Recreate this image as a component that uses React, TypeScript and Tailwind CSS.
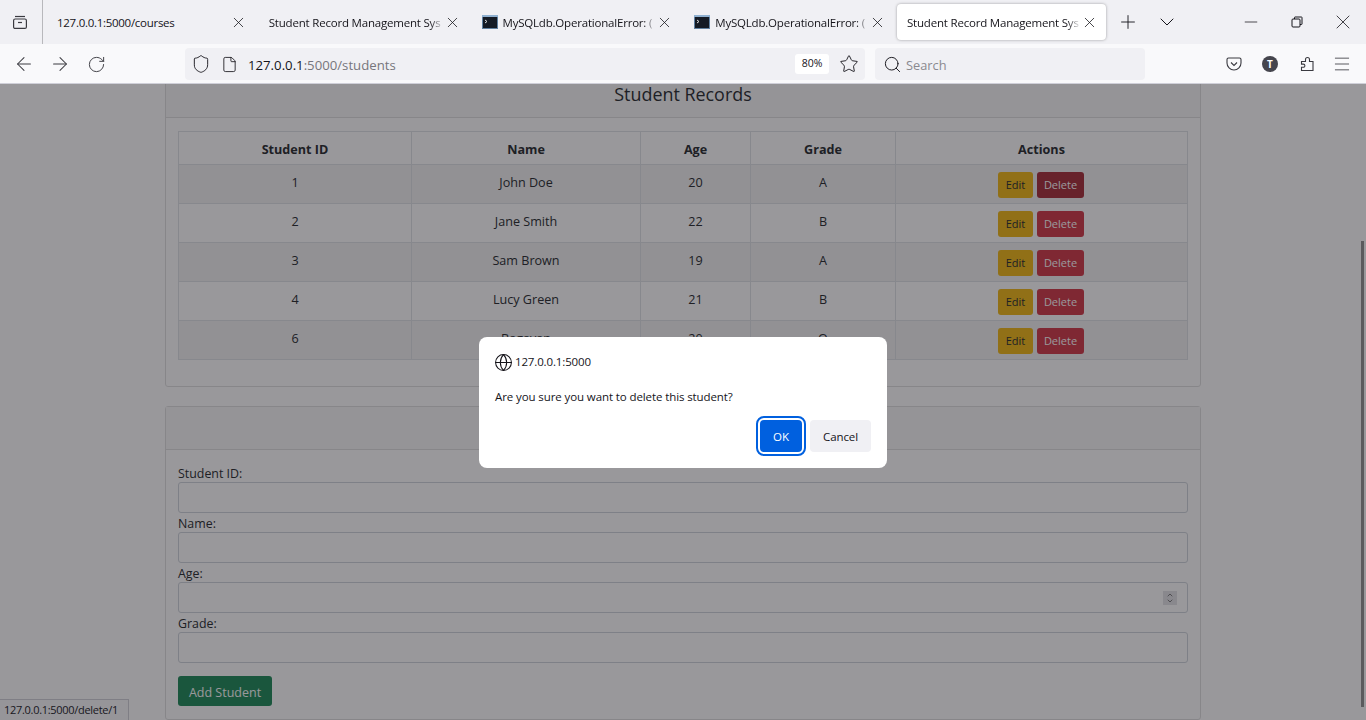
import { ArrowLeft, ArrowRight, Globe, Menu, Minus, Plus, RotateCw, Search, Star, X, ChevronDown, ChevronUp, Shield, File } from 'lucide-react';

const students = [
  { id: 1, name: 'John Doe', age: 20, grade: 'A' },
  { id: 2, name: 'Jane Smith', age: 22, grade: 'B' },
  { id: 3, name: 'Sam Brown', age: 19, grade: 'A' },
  { id: 4, name: 'Lucy Green', age: 21, grade: 'B' },
  { id: 6, name: 'Bagavan', age: 20, grade: 'O' },
];

const fade = 'overflow-hidden whitespace-nowrap [mask-image:linear-gradient(to_right,black_92%,transparent)]';
const tabText = 'pt-[1px] text-[11.5px] tracking-[-0.2px] text-[#15141a]';

function TerminalIcon() {
  return (
    <svg width="16" height="14" viewBox="0 0 16 14" className="shrink-0">
      <rect x="0" y="0" width="16" height="14" fill="#5f7f9f" />
      <rect x="0" y="0" width="16" height="2" fill="#8fb0d0" />
      <rect x="1" y="2" width="14" height="11" fill="#141a24" />
      <path d="M3 5l2 1.5-2 1.5" stroke="#ddd" strokeWidth="1" fill="none" />
    </svg>
  );
}

function Tab({ title, icon }: { title: string; icon?: boolean }) {
  return (
    <div className="flex w-[212.75px] shrink-0 items-center pr-[11px] pl-[10px]">
      {icon && <div className="mr-[5px] flex"><TerminalIcon /></div>}
      <span className={`min-w-0 flex-1 ${tabText} ${fade}`}>{title}</span>
      <X size={17} strokeWidth={1.1} className="shrink-0 text-[#15141a]" />
    </div>
  );
}

function TabBar() {
  return (
    <div className="flex h-[44px] items-center bg-[#f0f0f4]">
      <div className="flex h-full w-[43px] shrink-0 items-center justify-center border-r border-[#b8b8bc] pr-[2px]">
        <svg width="16" height="16" viewBox="0 0 16 16" fill="none" stroke="#3a3a40" strokeWidth="1.2">
          <path d="M3 2.5h10" />
          <rect x="1.6" y="5" width="12.8" height="9.4" rx="1.5" />
          <path d="M6 8.5h4" />
        </svg>
      </div>
      <div className="flex items-center pl-[3px]">
        <div className="flex w-[212.75px] shrink-0 items-center pr-[12px] pl-[11px]">
          <span className="min-w-0 flex-1 whitespace-nowrap pt-[1px] text-[11.5px] tracking-[-0.28px] text-[#15141a]">127.0.0.1:5000/courses</span>
          <X size={17} strokeWidth={1.1} className="shrink-0 text-[#15141a]" />
        </div>
        <Tab title="Student Record Management Sys" />
        <Tab title="MySQLdb.OperationalError: (" icon />
        <Tab title="MySQLdb.OperationalError: (" icon />
        <div className="flex h-[36px] w-[209px] shrink-0 items-center rounded-[4px] bg-white pr-[8px] pl-[10px] shadow-[0_0_3px_rgba(0,0,0,0.35)]">
          <span className={`min-w-0 flex-1 ${tabText} ${fade}`}>Student Record Management Sys</span>
          <X size={17} strokeWidth={1.1} className="shrink-0 text-[#15141a]" />
        </div>
      </div>
      <Plus size={22} strokeWidth={1} className="ml-[11px] shrink-0 text-[#15141a]" />
      <ChevronDown size={24} strokeWidth={1} className="ml-[16px] shrink-0 text-[#15141a]" />
      <div className="ml-auto flex items-center">
        <div className="flex w-[46px] justify-center"><Minus size={20} strokeWidth={0.9} className="text-[#15141a]" /></div>
        <div className="flex w-[46px] justify-center">
          <svg width="12" height="12" viewBox="0 0 12 12" fill="none" stroke="#15141a" strokeWidth="1">
            <rect x="1" y="3" width="8" height="8" rx="1" />
            <path d="M3.5 3V1.5a.5.5 0 0 1 .5-.5h6.5a.5.5 0 0 1 .5.5V8a.5.5 0 0 1-.5.5H9" />
          </svg>
        </div>
        <div className="flex w-[46px] justify-center"><X size={24} strokeWidth={0.8} className="text-[#15141a]" /></div>
      </div>
    </div>
  );
}

function NavBar() {
  return (
    <div className="flex h-[40px] items-center border-b border-[#cfcfd8] bg-[#f9f9fb] pt-[1px] text-[#15141a]">
      <div className="flex w-[185px] shrink-0 items-center pl-[6px] text-[#3a3a40]">
        <div className="flex w-[36px] justify-center"><ArrowLeft size={22} strokeWidth={1.1} /></div>
        <div className="flex w-[36px] justify-center"><ArrowRight size={22} strokeWidth={1.1} /></div>
        <div className="flex w-[36px] justify-center"><RotateCw size={19} strokeWidth={1.2} /></div>
      </div>
      <div className="flex h-[32px] w-[680px] shrink-0 items-center rounded-[4px] bg-[#f0f0f4] pl-[6px]">
        <Shield size={20} strokeWidth={1.1} />
        <File size={17} strokeWidth={1.2} className="ml-[10px]" />
        <span className="ml-[10px] pt-[3px] text-[13.2px] text-[#15141a]">127.0.0.1<span className="text-[#77767c]">:5000/students</span></span>
        <span className="ml-auto flex h-[20px] w-[34px] items-center justify-center rounded-[3px] bg-white text-[10.5px]">80%</span>
        <Star size={20} strokeWidth={1.1} className="mr-[6px] ml-[10px]" />
      </div>
      <div className="ml-[10px] flex h-[32px] w-[270px] shrink-0 items-center rounded-[4px] bg-[#f0f0f4] pl-[8px]">
        <Search size={19} strokeWidth={1.2} />
        <span className="ml-[4px] pt-[3px] text-[12.8px] text-[#8a898f]">Search</span>
      </div>
      <div className="ml-auto flex items-center pr-[14px]">
        <svg width="16" height="16" viewBox="0 0 16 16" fill="none" stroke="#3a3a40" strokeWidth="1.1" className="mr-[20px]">
          <path d="M2.5 2h11A1.5 1.5 0 0 1 15 3.5V7a7 7 0 0 1-14 0V3.5A1.5 1.5 0 0 1 2.5 2z" />
          <path d="M5 6.5l3 3 3-3" />
        </svg>
        <div className="mr-[21px] flex h-[16px] w-[16px] items-center justify-center rounded-full bg-[#45454d] text-[10px] font-bold text-white">T</div>
        <svg width="16" height="16" viewBox="0 0 16 16" fill="none" stroke="#3a3a40" strokeWidth="1.1" className="mr-[17px]">
          <path d="M6.5 3.5a2 2 0 0 1 4 0v2H14v9H2.5v-3.2H4.3a1.6 1.6 0 0 0 0-3.2H2.5V5.5h4z" />
        </svg>
        <Menu size={20} strokeWidth={1} className="text-[#3a3a40]" />
      </div>
    </div>
  );
}

function StudentTable() {
  return (
    <table className="w-[1009px] table-fixed border-collapse text-center text-[12.6px] text-[#212529]">
      <colgroup>
        <col className="w-[233px]" />
        <col className="w-[229px]" />
        <col className="w-[110px]" />
        <col className="w-[145px]" />
        <col className="w-[292px]" />
      </colgroup>
      <thead>
        <tr className="h-[33px] font-bold">
          {['Student ID', 'Name', 'Age', 'Grade', 'Actions'].map((h) => (
            <th key={h} className="border border-[#dee2e6] pt-[4px] align-middle">{h}</th>
          ))}
        </tr>
      </thead>
      <tbody>
        {students.map((s, i) => (
          <tr key={s.id} className={`h-[39px] ${i % 2 === 0 ? 'bg-[#f2f2f2]' : ''}`}>
            <td className="border border-[#dee2e6] pt-[9px] align-top">{s.id}</td>
            <td className="border border-[#dee2e6] pt-[9px] align-top">{s.name}</td>
            <td className="border border-[#dee2e6] pt-[9px] align-top">{s.age}</td>
            <td className="border border-[#dee2e6] pt-[9px] align-top">{s.grade}</td>
            <td className="border border-[#dee2e6] pt-[2px] align-middle">
              <div className="mr-[1px] flex justify-center gap-[4px] text-[11px]">
                <span className="flex h-[26px] w-[35px] items-center justify-center rounded-[3px] bg-[#f0b70f] text-[#212529]">Edit</span>
                <span className={`flex h-[26px] w-[47px] items-center justify-center rounded-[3px] text-white ${i === 0 ? 'bg-[#a52834]' : 'bg-[#d03343]'}`}>Delete</span>
              </div>
            </td>
          </tr>
        ))}
      </tbody>
    </table>
  );
}

function Field({ label, spinner }: { label: string; spinner?: boolean }) {
  return (
    <div className="h-[50px]">
      <div className="h-[20px] text-[12.4px] leading-[23px] text-[#212529]">{label}</div>
      <div className="flex h-[31px] items-center justify-end rounded-[3px] border border-[#ced4da] bg-white pr-[10px]">
        {spinner && (
          <div className="flex h-[14px] w-[14px] flex-col items-center justify-center bg-[#e2e2e6] text-[#444]">
            <ChevronUp size={8} strokeWidth={2} className="mb-[-1px]" />
            <ChevronDown size={8} strokeWidth={2} className="mt-[-1px]" />
          </div>
        )}
      </div>
    </div>
  );
}

function Page() {
  return (
    <div className="mx-auto mt-[-10px] w-[1036px]">
      <section className="rounded-[3px] border border-[#dfdfdf] bg-white">
        <div className="flex h-[43px] items-center justify-center border-b border-[#dfdfdf] bg-[#f7f7f7] pb-[5px] text-[17.9px] leading-[20px] text-[#212529]">
          Student Records
        </div>
        <div className="px-[12px] pt-[13px] pb-[26px]">
          <StudentTable />
        </div>
      </section>
      <section className="mt-[19px] rounded-[3px] border border-[#dfdfdf] bg-white">
        <div className="h-[43px] border-b border-[#dfdfdf] bg-[#f7f7f7]" />
        <div className="px-[12px] pt-[12px] pb-[13px]">
          <Field label="Student ID:" />
          <Field label="Name:" />
          <Field label="Age:" spinner />
          <Field label="Grade:" />
          <div className="mt-[14px] flex h-[30px] w-[94px] items-center justify-center rounded-[3px] bg-[#198754] pt-[4px] text-[12.5px] text-white">
            Add Student
          </div>
        </div>
      </section>
    </div>
  );
}

function Dialog() {
  return (
    <div className="absolute inset-0 flex justify-center bg-[#1c1b22]/45 pt-[253px]">
      <div className="h-[131px] w-[408px] rounded-[8px] bg-white px-[16px] pt-[17px] text-[11.5px] tracking-[-0.1px] text-[#15141a]">
        <div className="flex h-[16px] items-center">
          <Globe size={19} strokeWidth={1.3} className="mx-[-1.5px]" />
          <span className="ml-[4px] tracking-[-0.14px]">127.0.0.1:5000</span>
        </div>
        <div className="mt-[19px] h-[16px] leading-[16px]">Are you sure you want to delete this student?</div>
        <div className="mt-[15px] flex justify-end gap-[8px]">
          <button className="h-[32px] w-[42px] rounded-[4px] bg-[#0060df] pt-[1px] text-white outline-2 outline-offset-2 outline-[#0060df]">OK</button>
          <button className="h-[32px] w-[61px] rounded-[4px] bg-[#f0f0f4] pt-[1px]">Cancel</button>
        </div>
      </div>
    </div>
  );
}

export default function App() {
  return (
    <div className="flex h-[720px] w-[1366px] flex-col overflow-hidden bg-white font-['Open_Sans',sans-serif]">
      <TabBar />
      <NavBar />
      <main className="relative min-h-0 flex-1 overflow-hidden">
        <Page />
        <div className="absolute top-[157px] right-[2px] h-[466px] w-[3px] bg-[#8f8f8f]" />
        <div className="absolute bottom-0 left-0 flex h-[21px] w-[129px] items-center border-t border-r border-[#cfcfd8] bg-[#f9f9fb] pl-[4px] text-[11px] tracking-[-0.3px] text-[#15141a]">
          127.0.0.1:5000/delete/1
        </div>
        <Dialog />
      </main>
    </div>
  );
}
